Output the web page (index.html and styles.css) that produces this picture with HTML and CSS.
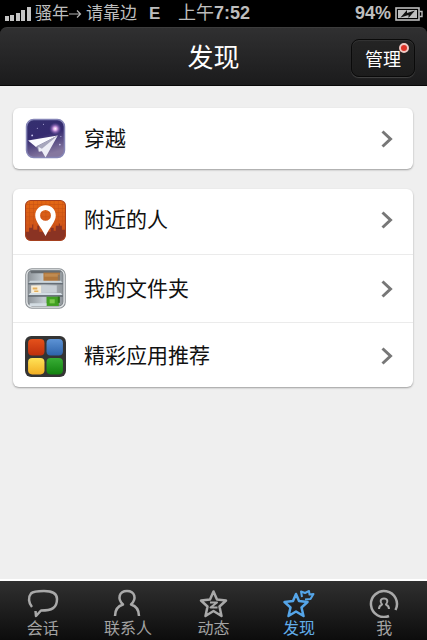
FILE: index.html
```html
<!DOCTYPE html>
<html lang="zh-CN">
<head>
    <meta charset="UTF-8">
    <meta name="viewport" content="width=device-width, initial-scale=1.0">
    <title>发现</title>
    <link rel="stylesheet" href="styles.css">
</head>
<body>

    <!-- Status bar -->
    <div class="status-bar">
        <div class="status-left">
            <svg class="signal" width="26" height="14" viewBox="0 0 26 14" fill="#c4c4c4">
                <rect x="0" y="9" width="4" height="5"/>
                <rect x="5" y="8" width="4" height="6"/>
                <rect x="11" y="6" width="4" height="8"/>
                <rect x="16" y="3" width="4" height="11"/>
                <rect x="22" y="0" width="4" height="14"/>
            </svg>
            <span class="carrier">骚年<svg width="13" height="10" viewBox="0 0 13 10" fill="none" stroke="#b4b4b4" stroke-width="1.2"><path d="M0 5h11.500M8 1.500L11.500 5L8 8.500"/></svg></span>
            <span class="carrier">请靠边</span>
            <span class="network">E</span>
        </div>
        <div class="time">上午<b>7:52</b></div>
        <div class="status-right">
            <span class="percent">94%</span>
            <svg width="28" height="14" viewBox="0 0 28 14">
                <rect x="1" y="1" width="23" height="12" fill="none" stroke="#bdbdbd" stroke-width="1.600"/>
                <rect x="3" y="3" width="19" height="8" fill="#bdbdbd"/>
                <path d="M24.500 4.500H27V9.500H24.500" fill="none" stroke="#bdbdbd" stroke-width="1.400"/>
                <path d="M5.500 10.500L12 3V6L20 3.500L13.500 11V8Z" fill="#111"/>
            </svg>
        </div>
    </div>

    <header class="header">
        <h1>发现</h1>
        <button type="button" class="manage">管理<span class="dot"></span></button>
    </header>

    <main class="content">
        <div class="card">
            <a href="#" class="row">
                <svg class="app-icon" viewBox="0 0 40 40">
                    <defs>
                        <linearGradient id="sky" x1="0" y1="0" x2="0.3" y2="1">
                            <stop offset="0" stop-color="#34306f"/>
                            <stop offset="0.5" stop-color="#352b70"/>
                            <stop offset="1" stop-color="#85779f"/>
                        </linearGradient>
                        <radialGradient id="star">
                            <stop offset="0" stop-color="#fff"/>
                            <stop offset="0.3" stop-color="#dba6e6"/>
                            <stop offset="1" stop-color="#6a4aa5" stop-opacity="0"/>
                        </radialGradient>
                    </defs>
                    <rect x="1.500" y="1.500" width="37" height="37" rx="7" fill="url(#sky)" stroke="#8585b6" stroke-width="1.500"/>
                    <circle cx="29.500" cy="10.500" r="6" fill="url(#star)"/>
                    <g fill="#c9c5ee">
                        <circle cx="7" cy="17" r="0.900"/>
                        <circle cx="18" cy="6" r="0.500"/>
                        <circle cx="34" cy="26" r="0.800"/>
                        <circle cx="12" cy="10" r="0.500"/>
                        <circle cx="35" cy="18" r="0.500"/>
                    </g>
                    <path d="M3 22L32 17L11 28.500Z" fill="#fbfbff"/>
                    <path d="M11 27.500L32 17L15 30L13.500 33Z" fill="#8e8cab"/>
                    <path d="M13 28.500L32 17L20 38.500L16.500 32.500L13.500 33Z" fill="#ededf6"/>
                    <path d="M12 27.500L32 17L16.500 30Z" fill="#a7a6bd"/>
                </svg>
                <span class="row-text">穿越</span>
                <svg class="chevron" viewBox="0 0 12 18"><path d="M1.500 1.500L9.500 9L1.500 16.500"/></svg>
            </a>
        </div>

        <div class="card card-list">
            <a href="#" class="row">
                <svg class="app-icon" viewBox="0 0 40 40">
                    <defs>
                        <linearGradient id="orange" x1="0" y1="0" x2="0" y2="1">
                            <stop offset="0" stop-color="#e46814"/>
                            <stop offset="1" stop-color="#c64a1b"/>
                        </linearGradient>
                        <pattern id="grid" width="4" height="4" patternUnits="userSpaceOnUse">
                            <path d="M0 0H4M0 0V4" stroke="#c24d12" stroke-width="0.800"/>
                        </pattern>
                    </defs>
                    <rect x="0.500" y="0.500" width="39" height="39" rx="5" fill="url(#orange)"/>
                    <rect x="1" y="1" width="38" height="30" rx="5" fill="url(#grid)"/>
                    <path d="M1 31H4V27H7V24H8V29H12V25H14V31H25V27H28V30H30V25H33V23H34V25H36V29H39V35Q39 39 35 39H5Q1 39 1 35Z" fill="#8a3323"/>
                    <rect x="0.500" y="0.500" width="39" height="39" rx="5" fill="none" stroke="#a5401f"/>
                    <path fill-rule="evenodd" d="M20 5C14 5 10 9.500 10 15C10 21 15 25 20 35C25 25 30 21 30 15C30 9.500 26 5 20 5ZM20 9.700A5.300 5.300 0 1 1 20 20.300A5.300 5.300 0 1 1 20 9.700Z" fill="#fff"/>
                </svg>
                <span class="row-text">附近的人</span>
                <svg class="chevron" viewBox="0 0 12 18"><path d="M1.500 1.500L9.500 9L1.500 16.500"/></svg>
            </a>
            <a href="#" class="row">
                <svg class="app-icon" viewBox="0 0 40 40">
                    <defs>
                        <linearGradient id="shelf" x1="0" y1="0" x2="1" y2="0">
                            <stop offset="0" stop-color="#8e9499"/>
                            <stop offset="0.45" stop-color="#c2cad0"/>
                            <stop offset="1" stop-color="#90969b"/>
                        </linearGradient>
                    </defs>
                    <rect x="0.700" y="0.700" width="38.600" height="38.600" rx="6" fill="#e4e7e9" stroke="#8d9296" stroke-width="1"/>
                    <rect x="3" y="2.500" width="34" height="34.500" rx="4" fill="url(#shelf)" stroke="#7b8287"/>
                    <path d="M5 3H35L34 5H6Z" fill="#666c71"/>
                    <rect x="18" y="4.500" width="16" height="9" fill="#b0763b"/>
                    <rect x="19" y="5.500" width="14" height="3" fill="#c18b50"/>
                    <path d="M32 6L34 7V13H32Z" fill="#8c745c"/>
                    <path d="M5 12.500H35L37 15H3Z" fill="#cdd7dd"/>
                    <rect x="3" y="14.500" width="34" height="1.500" fill="#656d75"/>
                    <rect x="6" y="17" width="10" height="8" fill="#f6eedb"/>
                    <path d="M7.500 19H12V21H7.500ZM9 22H13V23.500H9Z" fill="#e5b05b"/>
                    <rect x="16" y="17" width="15" height="7" fill="#c9d0d6"/>
                    <path d="M5 24.500H35L37 27H3Z" fill="#d3dde4"/>
                    <rect x="3" y="26.500" width="34" height="1.500" fill="#5d656d"/>
                    <rect x="21" y="28" width="12" height="9" fill="#41a022"/>
                    <path d="M24 30.500H29V34.500H24Z" fill="#7bc94e"/>
                    <rect x="32" y="28" width="2" height="6" fill="#2a7416"/>
                    <path d="M5 34.500H21V37H4Z" fill="#d3dce2"/>
                </svg>
                <span class="row-text">我的文件夹</span>
                <svg class="chevron" viewBox="0 0 12 18"><path d="M1.500 1.500L9.500 9L1.500 16.500"/></svg>
            </a>
            <a href="#" class="row">
                <svg class="app-icon" viewBox="0 0 40 40">
                    <defs>
                        <linearGradient id="red" x1="0" y1="0" x2="0" y2="1"><stop offset="0" stop-color="#e5511b"/><stop offset="1" stop-color="#bd2e0c"/></linearGradient>
                        <linearGradient id="blue" x1="0" y1="0" x2="0" y2="1"><stop offset="0" stop-color="#5d93d5"/><stop offset="1" stop-color="#2d63aa"/></linearGradient>
                        <linearGradient id="yellow" x1="0" y1="0" x2="0" y2="1"><stop offset="0" stop-color="#ffe257"/><stop offset="1" stop-color="#f2ae22"/></linearGradient>
                        <linearGradient id="green" x1="0" y1="0" x2="0" y2="1"><stop offset="0" stop-color="#38ad35"/><stop offset="1" stop-color="#12820f"/></linearGradient>
                    </defs>
                    <rect width="40" height="40" rx="6" fill="#343434"/>
                    <rect x="3" y="3" width="16" height="16" rx="4" fill="url(#red)"/>
                    <rect x="21" y="3" width="16" height="16" rx="4" fill="url(#blue)"/>
                    <rect x="3" y="21.500" width="16" height="16" rx="4" fill="url(#yellow)"/>
                    <rect x="21" y="21.500" width="16" height="16" rx="4" fill="url(#green)"/>
                </svg>
                <span class="row-text">精彩应用推荐</span>
                <svg class="chevron" viewBox="0 0 12 18"><path d="M1.500 1.500L9.500 9L1.500 16.500"/></svg>
            </a>
        </div>
    </main>

    <!-- Bottom tabs -->
    <nav class="tab-bar">
        <a href="#" class="tab">
            <svg viewBox="0 0 32 30"><path d="M5 19C1.500 15 1 9 4 5.500C6.500 3 11 3 17 3C26 3 30 6 30 11C30 20 25 22.500 14 22.500L9 28L8.500 23"/></svg>
            <span>会话</span>
        </a>
        <a href="#" class="tab">
            <svg viewBox="0 0 32 30"><path d="M3 28C3 22 6 18 11 16.500C5 11 7 3 15 3C23 3 25 11 19 16.500C24 18 27 22 27 28"/></svg>
            <span>联系人</span>
        </a>
        <a href="#" class="tab">
            <svg viewBox="0 0 32 30"><path d="M15.500 3.500L19 11.500L28 12.500L21.500 18.500L23.500 28L15.500 23L7.500 28L9.500 18.500L3 12.500L12 11.500Z"/><path class="thin" d="M12 14.500H19L12.500 19.500H19.500"/></svg>
            <span>动态</span>
        </a>
        <a href="#" class="tab active">
            <svg viewBox="0 0 32 30"><path d="M13 6L16 13L24.500 14L18.500 19.500L20.500 28L13 23.500L5.500 28L7.500 19.500L1.500 14L10 13Z"/><path class="thin" d="M19 9L18 3.500L22 5L26 3L26.500 6.500L30.500 6L27.500 11L22 11.500"/></svg>
            <span>发现</span>
        </a>
        <a href="#" class="tab">
            <svg viewBox="0 0 32 30"><path d="M21 28A13 13 0 1 1 27.500 22"/><path class="thin" d="M11 21C11 18.500 12 17.500 14 16.500C11.500 13.500 12.500 10.500 16 10.500C19.500 10.500 20.500 13.500 18 16.500C20 17.500 21 18.500 21 21"/></svg>
            <span>我</span>
        </a>
    </nav>

</body>
</html>
```
FILE: styles.css
```css
* {
    margin: 0;
    padding: 0;
    box-sizing: border-box;
}

body {
    font-family: "Liberation Sans", "Noto Sans CJK SC", sans-serif;
    background-color: #000;
    color: #111;
    display: flex;
    flex-direction: column;
    min-height: 100vh;
}

a {
    color: inherit;
    text-decoration: none;
}

/* Status bar */
.status-bar {
    display: grid;
    grid-template-columns: 1fr auto 1fr;
    align-items: center;
    height: 27px;
    padding: 0 4px 0 5px;
    color: #bdbdbd;
    font-size: 17px;
    line-height: 27px;
    white-space: nowrap;
}

.status-left, .status-right {
    display: flex;
    align-items: center;
    gap: 4px;
}

.status-right {
    justify-content: flex-end;
}

.network {
    font-size: 17px;
    font-weight: bold;
    margin-left: 8px;
}

.time, .percent {
    font-size: 18px;
}

.percent {
    font-weight: bold;
}

/* Header */
.header {
    display: grid;
    grid-template-columns: 1fr auto 1fr;
    align-items: center;
    height: 59px;
    padding: 2px 12px 0;
    background: linear-gradient(#303031, #1b1b1c);
    border-top: 1px solid #3c3c3c;
    border-bottom: 1px solid #080808;
    border-radius: 7px 7px 0 0;
}

.header h1 {
    grid-column: 2;
    color: #fff;
    font-size: 26px;
    font-weight: normal;
    line-height: 36px;
}

.manage {
    position: relative;
    justify-self: end;
    width: 64px;
    height: 38px;
    background: linear-gradient(#242424, #1c1c1c);
    border: 1px solid #0a0a0a;
    border-radius: 8px;
    box-shadow: 0 1px 1px #444, inset 0 1px 1px #353535;
    color: #fff;
    font-family: inherit;
    font-size: 18px;
    cursor: pointer;
}

.dot {
    position: absolute;
    top: 3px;
    right: 5px;
    width: 10px;
    height: 10px;
    background-color: #dc3226;
    border: 2px solid #f0c9c4;
    border-radius: 50%;
}

/* Content */
.content {
    flex: 1;
    display: flex;
    flex-direction: column;
    gap: 20px;
    padding: 22px 14px 22px 13px;
    background-color: #efefef;
    border-bottom: 2px solid #fff;
}

.card {
    background-color: #fff;
    border-radius: 6px;
    box-shadow: 0 1px 2px rgba(0, 0, 0, 0.35);
}

.row {
    display: flex;
    align-items: center;
    height: 61px;
    padding: 0 20px 0 12px;
}

.card-list .row {
    height: 68px;
}

.card-list .row:first-child {
    height: 65px;
    padding-bottom: 3px;
}

.card-list .row:last-child {
    height: 65px;
    padding-top: 2px;
}

.card-list .row + .row {
    border-top: 1px solid #ebebeb;
}

.app-icon {
    width: 41px;
    height: 41px;
    margin-right: 18px;
}

.row-text {
    flex: 1;
    font-size: 21px;
    line-height: 30px;
}

.chevron {
    width: 12px;
    height: 18px;
    fill: none;
    stroke: #777;
    stroke-width: 3;
}

/* Tab bar */
.tab-bar {
    display: flex;
    height: 59px;
    padding-top: 7px;
    background: linear-gradient(#303030, #0c0c0c);
}

.tab {
    flex: 1;
    display: flex;
    flex-direction: column;
    align-items: center;
    color: #a3a3a3;
    font-size: 16px;
    line-height: 22px;
}

.tab svg {
    width: 32px;
    height: 30px;
    fill: none;
    stroke: #a9a9a9;
    stroke-width: 2.5;
    stroke-linejoin: round;
}

.tab svg .thin {
    stroke-width: 2;
}

.tab.active {
    color: #62ade9;
}

.tab.active svg {
    stroke: #55a5e8;
}
```
